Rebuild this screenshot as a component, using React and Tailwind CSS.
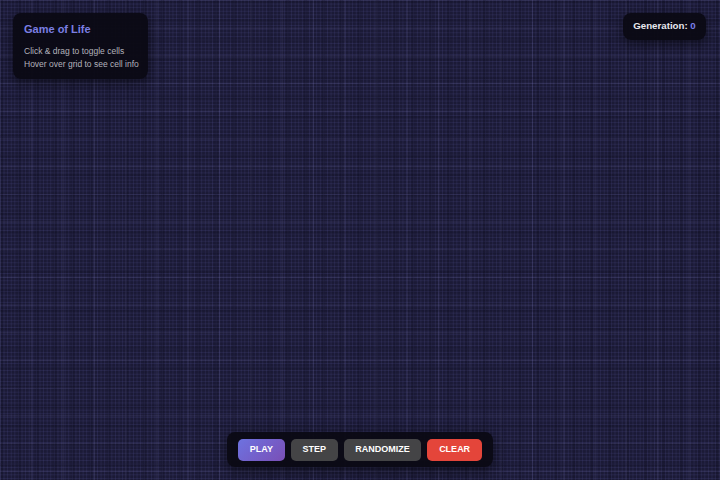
export default function App() {
  return (
    <div className="relative w-[720px] h-[480px] overflow-hidden bg-[#1b1a36] font-['Liberation_Sans',Arial,sans-serif]">
      {/* cell grid canvas: fine cell lines plus sparser highlight lines */}
      <div className="absolute inset-0 bg-[linear-gradient(to_right,rgba(105,105,185,0.15)_0.5px,transparent_0.5px),linear-gradient(to_bottom,rgba(105,105,185,0.15)_0.5px,transparent_0.5px)] bg-[size:3.6px_3.6px]" />
      <div className="absolute inset-0 bg-[linear-gradient(to_right,rgba(150,148,215,0.14)_1px,transparent_1px),linear-gradient(to_bottom,rgba(150,148,215,0.14)_1px,transparent_1px)] bg-[size:31.3px_27.7px]" />
      <div className="absolute inset-0 bg-[linear-gradient(to_right,rgba(10,9,25,0.18)_3px,transparent_3px),linear-gradient(to_bottom,rgba(10,9,25,0.15)_3px,transparent_3px)] bg-[size:17.9px_19.3px]" />

      {/* info panel */}
      <div className="absolute left-[13px] top-[13px] w-[135px] h-[66px] rounded-lg bg-[#0b0a14]/95 shadow-[0_4px_14px_rgba(0,0,0,0.5)] px-[11px] pt-[10px]">
        <div className="text-[11px] font-bold text-[#7b7fe3] leading-[13px] whitespace-nowrap">Game of Life</div>
        <div className="mt-[9px] text-[8.5px] leading-[13px] text-[#b3b2bc] whitespace-nowrap">
          <div>Click &amp; drag to toggle cells</div>
          <div>Hover over grid to see cell info</div>
        </div>
      </div>

      {/* generation counter */}
      <div className="absolute right-[14px] top-[13px] w-[83px] h-[27px] rounded-lg bg-[#0b0a14]/95 shadow-[0_4px_14px_rgba(0,0,0,0.5)] flex items-center justify-center">
        <span className="text-[9.7px] font-bold text-[#e8e8ee] whitespace-nowrap">
          Generation: <span className="text-[#7b7fe8]">0</span>
        </span>
      </div>

      {/* controls */}
      <div className="absolute left-[227px] top-[432px] w-[266px] h-[35px] rounded-lg bg-[#0b0a14]/95 shadow-[0_4px_14px_rgba(0,0,0,0.5)] flex items-center gap-[6px] px-[11px]">
        <button className="w-[47px] h-[22px] rounded-[5px] bg-[linear-gradient(135deg,#6d72e0,#7a4fb6)] text-white text-[9px] font-bold">
          PLAY
        </button>
        <button className="w-[47px] h-[22px] rounded-[5px] bg-[#444446] text-white text-[9px] font-bold">
          STEP
        </button>
        <button className="w-[78px] h-[22px] rounded-[5px] bg-[#444446] text-white text-[9px] font-bold">
          RANDOMIZE
        </button>
        <button className="w-[55px] h-[22px] rounded-[5px] bg-[#e4453a] text-white text-[9px] font-bold">
          CLEAR
        </button>
      </div>
    </div>
  );
}
